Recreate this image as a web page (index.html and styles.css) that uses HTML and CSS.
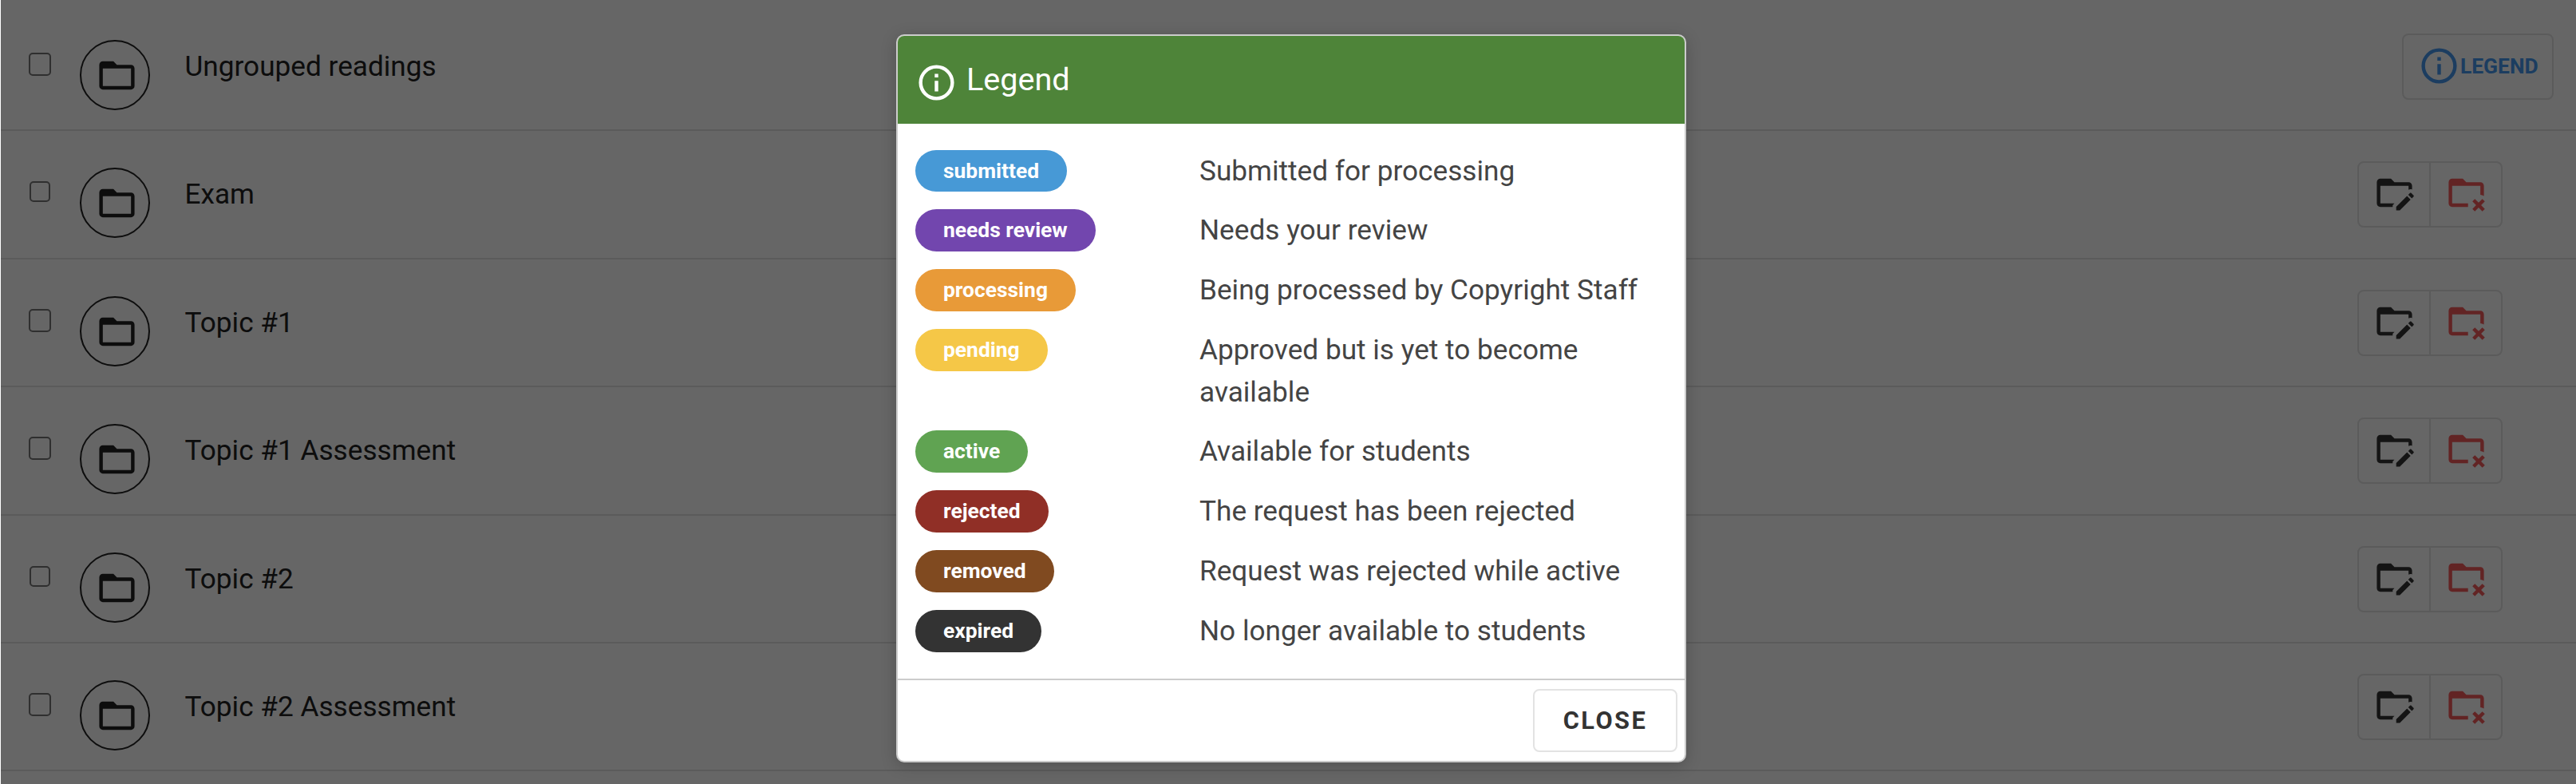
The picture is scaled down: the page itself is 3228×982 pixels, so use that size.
FILE: index.html
```html
<!DOCTYPE html>
<html lang="en">
<head>
<meta charset="utf-8">
<title>Readings</title>
<link rel="stylesheet" href="styles.css">
</head>
<body>
  <svg class="sprite">
    <symbol id="folder" viewBox="0 0 24 24">
      <path d="M20,18H4V8H20M20,6H12L10,4H4C2.89,4 2,4.89 2,6V18A2,2 0 0,0 4,20H20A2,2 0 0,0 22,18V8C22,6.89 21.1,6 20,6Z"/>
    </symbol>
    <symbol id="folder-edit" viewBox="0 0 24 24">
      <path d="M4 18H12L11 19V20H4C2.9 20 2 19.11 2 18V6C2 4.89 2.89 4 4 4H10L12 6H20C21.1 6 22 6.89 22 8V10.17C21.74 10.06 21.46 10 21.17 10C20.75 10 20.36 10.11 20 10.3V8H4V18M22.85 14.19L21.87 15.17L19.83 13.13L20.81 12.15C21 11.95 21.33 11.95 21.53 12.15L22.85 13.47C23.05 13.67 23.05 14 22.85 14.19M13 19.94L19.12 13.81L21.16 15.85L15.04 22H13V19.94Z"/>
    </symbol>
    <symbol id="folder-remove" viewBox="0 0 24 24">
      <path d="M4 18H13V20H4C2.9 20 2 19.11 2 18V6C2 4.89 2.89 4 4 4H10L12 6H20C21.1 6 22 6.89 22 8V13.8C21.4 13.4 20.7 13.2 20 13.1V8H4V18M22.54 16.88L21.12 15.47L19 17.59L16.88 15.47L15.47 16.88L17.59 19L15.47 21.12L16.88 22.54L19 20.41L21.12 22.54L22.54 21.12L20.41 19L22.54 16.88Z"/>
    </symbol>
    <symbol id="info" viewBox="0 0 24 24">
      <path d="M11,9H13V7H11M12,20C7.59,20 4,16.41 4,12C4,7.59 7.59,4 12,4C16.41,4 20,7.59 20,12C20,16.41 16.41,20 12,20M12,2A10,10 0 0,0 2,12A10,10 0 0,0 12,22A10,10 0 0,0 22,12A10,10 0 0,0 12,2M11,17H13V11H11V17Z"/>
    </symbol>
  </svg>

  <div class="readings">
    <div class="row row-first">
      <span class="checkbox checkbox-lg"></span>
      <span class="folder"><svg class="icon"><use href="#folder"/></svg></span>
      <span class="name">Ungrouped readings</span>
      <button class="legend-btn"><svg class="icon"><use href="#info"/></svg>LEGEND</button>
    </div>
    <div class="row">
      <span class="checkbox"></span>
      <span class="folder"><svg class="icon"><use href="#folder"/></svg></span>
      <span class="name">Exam</span>
      <div class="actions">
        <button class="edit"><svg class="icon"><use href="#folder-edit"/></svg></button>
        <button class="remove"><svg class="icon"><use href="#folder-remove"/></svg></button>
      </div>
    </div>
    <div class="row">
      <span class="checkbox checkbox-lg"></span>
      <span class="folder"><svg class="icon"><use href="#folder"/></svg></span>
      <span class="name">Topic #1</span>
      <div class="actions">
        <button class="edit"><svg class="icon"><use href="#folder-edit"/></svg></button>
        <button class="remove"><svg class="icon"><use href="#folder-remove"/></svg></button>
      </div>
    </div>
    <div class="row">
      <span class="checkbox checkbox-lg"></span>
      <span class="folder"><svg class="icon"><use href="#folder"/></svg></span>
      <span class="name">Topic #1 Assessment</span>
      <div class="actions">
        <button class="edit"><svg class="icon"><use href="#folder-edit"/></svg></button>
        <button class="remove"><svg class="icon"><use href="#folder-remove"/></svg></button>
      </div>
    </div>
    <div class="row">
      <span class="checkbox"></span>
      <span class="folder"><svg class="icon"><use href="#folder"/></svg></span>
      <span class="name">Topic #2</span>
      <div class="actions">
        <button class="edit"><svg class="icon"><use href="#folder-edit"/></svg></button>
        <button class="remove"><svg class="icon"><use href="#folder-remove"/></svg></button>
      </div>
    </div>
    <div class="row">
      <span class="checkbox checkbox-lg"></span>
      <span class="folder"><svg class="icon"><use href="#folder"/></svg></span>
      <span class="name">Topic #2 Assessment</span>
      <div class="actions">
        <button class="edit"><svg class="icon"><use href="#folder-edit"/></svg></button>
        <button class="remove"><svg class="icon"><use href="#folder-remove"/></svg></button>
      </div>
    </div>
  </div>

  <div class="overlay">
    <div class="modal">
      <div class="modal-header"><svg class="icon"><use href="#info"/></svg><span>Legend</span></div>
      <div class="modal-body">
        <span class="pill submitted">submitted</span><p>Submitted for processing</p>
        <span class="pill needs-review">needs review</span><p>Needs your review</p>
        <span class="pill processing">processing</span><p>Being processed by Copyright Staff</p>
        <span class="pill pending">pending</span><p>Approved but is yet to become available</p>
        <span class="pill active">active</span><p>Available for students</p>
        <span class="pill rejected">rejected</span><p>The request has been rejected</p>
        <span class="pill removed">removed</span><p>Request was rejected while active</p>
        <span class="pill expired">expired</span><p>No longer available to students</p>
      </div>
      <div class="modal-footer"><button class="close">CLOSE</button></div>
    </div>
  </div>
</body>
</html>
```
FILE: styles.css
```css
* {
  box-sizing: border-box;
}

body {
  margin: 0;
  height: 982px;
  overflow: hidden;
  background: #fff;
  font-family: Roboto, sans-serif;
  font-size: 35.2px;
  color: #222;
}

button {
  font-family: inherit;
  background: none;
  border: 2px solid #e3e3e3;
  border-radius: 8px;
}

.sprite {
  display: none;
}

.icon {
  display: block;
  flex: none;
  width: 53px;
  height: 53px;
  fill: currentColor;
}

.readings {
  padding-left: 1px;
}

.row {
  display: flex;
  align-items: flex-start;
  height: 160.4px;
  padding: 46px 28px 0 35px;
  border-bottom: 2px solid #e3e3e3;
}

.row-first {
  height: 164.4px;
  padding-top: 50px;
}

.checkbox {
  width: 26px;
  height: 26px;
  margin: 17px 37px 0 1px;
  border: 2px solid #767676;
  border-radius: 5px;
}

.checkbox-lg {
  width: 28px;
  height: 29px;
  margin: 16px 36px 0 0;
}

.folder {
  display: flex;
  align-items: flex-start;
  width: 88px;
  height: 88px;
  padding: 16px 0 0 18px;
  border: 2px solid #222;
  border-radius: 50%;
}

.name {
  margin: 12px auto 0 43.5px;
  line-height: 42px;
}

.actions {
  display: flex;
  width: 182px;
  height: 83px;
  margin: -8px 64px 0 0;
  border: 2px solid #e3e3e3;
  border-radius: 8px;
}

.actions button {
  flex: 1;
  padding: 0 0 4px 18px;
  border: 0;
  border-radius: 0;
}

.actions .edit {
  color: #333;
  border-right: 2px solid #e3e3e3;
}

.actions .remove {
  color: #f55a5a;
}

.legend-btn {
  display: flex;
  align-items: center;
  width: 190px;
  height: 83px;
  margin-top: -8px;
  padding: 0 0 2px 18px;
  font-size: 26.4px;
  font-weight: 700;
  color: #4698f0;
}

.overlay {
  position: absolute;
  inset: 0 0 0 1px;
  display: flex;
  justify-content: center;
  align-items: flex-start;
  padding: 43px 0 0 7px;
  background: rgba(0, 0, 0, .6);
}

.modal {
  width: 990px;
  height: 912px;
  overflow: hidden;
  background: #fff;
  border: 2px solid #ccc;
  border-radius: 10px;
  box-shadow: 0 4px 20px rgba(0, 0, 0, .2);
}

.modal-header {
  display: flex;
  gap: 11px;
  height: 110px;
  padding: 32px 0 0 22px;
  background: #4e8439;
  color: #fff;
  font-size: 39.6px;
  line-height: 46px;
}

.modal-body {
  display: grid;
  grid-template-columns: 334px 1fr;
  justify-items: start;
  align-items: start;
  align-content: start;
  row-gap: 22.05px;
  height: 695px;
  padding: 32.5px 22px 0;
  line-height: 52.75px;
  color: #444;
}

.modal-body p {
  margin: 0;
  padding-left: 22px;
}

.pill {
  padding: 0 35px;
  border-radius: 27px;
  font-size: 26.4px;
  font-weight: 700;
  color: #fff;
}

.submitted { background: #4799d6; }
.needs-review { background: #7246ae; }
.processing { background: #e89a38; }
.pending { background: #f5c747; }
.active { background: #60a352; }
.rejected { background: #902f26; }
.removed { background: #804a20; }
.expired { background: #333; }

.modal-footer {
  display: flex;
  justify-content: flex-end;
  padding: 11px 9px 0 0;
  border-top: 2px solid #ccc;
}

.close {
  width: 181px;
  height: 79px;
  font-size: 30.8px;
  font-weight: 700;
  letter-spacing: 2.4px;
  color: #333;
}
```
